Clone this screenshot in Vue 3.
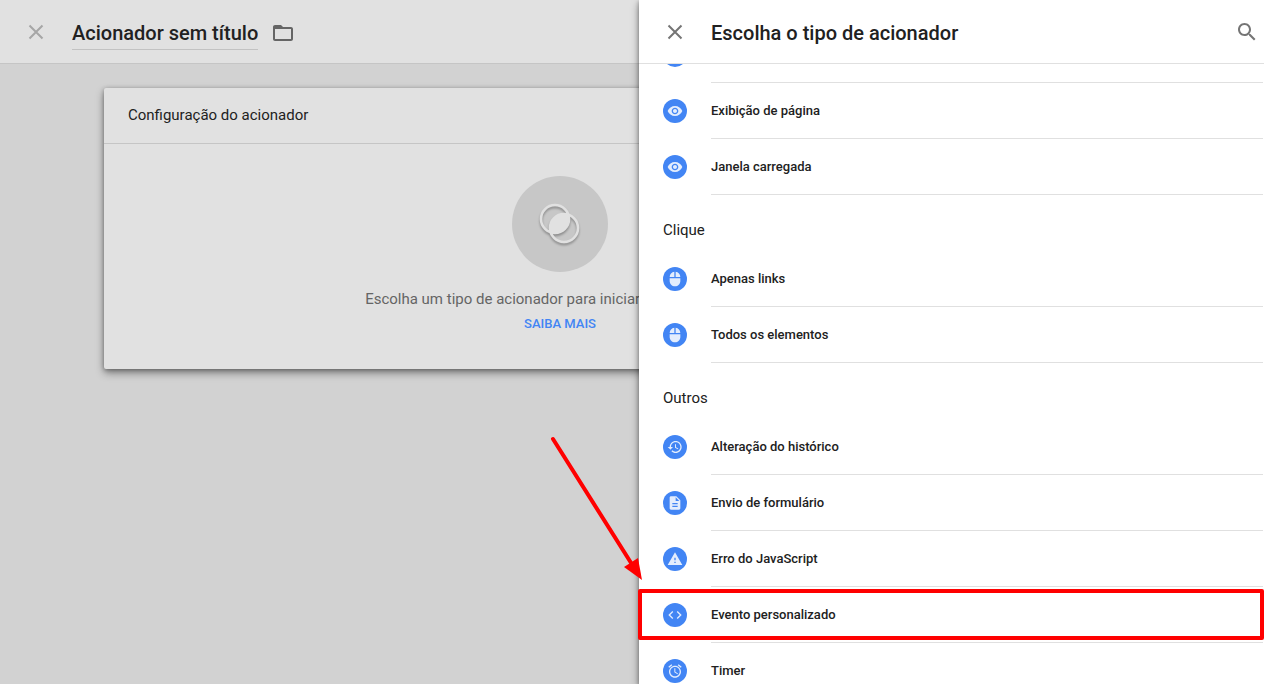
<script setup>
import { ref } from 'vue'

const title = ref('Acionador sem título')

const paths = {
  eye: 'M12 4.5C7 4.5 2.73 7.61 1 12c1.73 4.39 6 7.5 11 7.5s9.27-3.11 11-7.5c-1.73-4.39-6-7.5-11-7.5zM12 17c-2.76 0-5-2.24-5-5s2.24-5 5-5 5 2.24 5 5-2.24 5-5 5zm0-8c-1.66 0-3 1.34-3 3s1.34 3 3 3 3-1.34 3-3-1.34-3-3-3z',
  mouse: 'M13 1.07V9h7c0-4.08-3.05-7.44-7-7.93zM4 15c0 4.42 3.58 8 8 8s8-3.58 8-8v-4H4v4zm7-13.93C7.05 1.56 4 4.92 4 9h7V1.07z',
  history: 'M13 3c-4.97 0-9 4.03-9 9H1l3.89 3.89.07.14L9 12H6c0-3.87 3.13-7 7-7s7 3.13 7 7-3.13 7-7 7c-1.93 0-3.68-.79-4.94-2.06l-1.42 1.42C8.27 19.99 10.51 21 13 21c4.97 0 9-4.03 9-9s-4.03-9-9-9zm-1 5v5l4.28 2.54.72-1.21-3.5-2.08V8H12z',
  file: 'M14 2H6c-1.1 0-1.99.9-1.99 2L4 20c0 1.1.89 2 1.99 2H18c1.1 0 2-.9 2-2V8l-6-6zm2 16H8v-2h8v2zm0-4H8v-2h8v2zm-3-5V3.5L18.5 9H13z',
  warning: 'M1 21h22L12 2 1 21zm12-3h-2v-2h2v2zm0-4h-2v-4h2v4z',
  code: 'M9.4 16.6L4.8 12l4.6-4.6L8 6l-6 6 6 6 1.4-1.4zm5.2 0l4.6-4.6-4.6-4.6L16 6l6 6-6 6-1.4-1.4z',
  alarm: 'M22 5.72l-4.6-3.86-1.29 1.53 4.6 3.86L22 5.72zM7.88 3.39L6.6 1.86 2 5.71l1.29 1.53 4.59-3.85zM12.5 8H11v6l4.75 2.85.75-1.23-4-2.37V8zM12 4c-4.97 0-9 4.03-9 9s4.02 9 9 9c4.97 0 9-4.03 9-9s-4.03-9-9-9zm0 16c-3.87 0-7-3.13-7-7s3.13-7 7-7 7 3.13 7 7-3.13 7-7 7z'
}

const groups = [
  {
    items: [
      { icon: 'eye', label: '' },
      { icon: 'eye', label: 'Exibição de página' },
      { icon: 'eye', label: 'Janela carregada' }
    ]
  },
  {
    heading: 'Clique',
    items: [
      { icon: 'mouse', label: 'Apenas links' },
      { icon: 'mouse', label: 'Todos os elementos' }
    ]
  },
  {
    heading: 'Outros',
    items: [
      { icon: 'history', label: 'Alteração do histórico' },
      { icon: 'file', label: 'Envio de formulário' },
      { icon: 'warning', label: 'Erro do JavaScript' },
      { icon: 'code', label: 'Evento personalizado' },
      { icon: 'alarm', label: 'Timer' }
    ]
  }
]
</script>

<template>
  <div class="screen">
    <main class="editor">
      <header class="bar editor-bar">
        <button class="icon-button" aria-label="Fechar">
          <svg width="16" height="16" viewBox="0 0 16 16"><path d="M1.5 1.5l13 13M14.5 1.5l-13 13" fill="none" stroke="#a6a6a6" stroke-width="2" /></svg>
        </button>
        <input v-model="title" class="title title-input" aria-label="Nome" />
        <button class="icon-button folder" aria-label="Pasta">
          <svg width="24" height="24" viewBox="0 0 24 24"><path fill="#656565" d="M20 6h-8l-2-2H4c-1.1 0-2 .9-2 2v12c0 1.1.9 2 2 2h16c1.1 0 2-.9 2-2V8c0-1.1-.9-2-2-2zm0 12H4V8h16v10z" /></svg>
        </button>
      </header>
      <section class="card">
        <h2 class="card-title">Configuração do acionador</h2>
        <div class="card-body">
          <div class="emblem">
            <svg width="48" height="48" viewBox="0 0 48 48">
              <g class="rings">
                <circle cx="19" cy="19" r="14" fill="none" stroke="#e1e1e1" stroke-width="2.6" />
                <circle cx="28" cy="28" r="14" fill="none" stroke="#e1e1e1" stroke-width="2.6" />
                <path d="M32.800 14.200A15 15 0 0 1 14.200 32.800A15 15 0 0 1 32.800 14.200z" fill="#e1e1e1" />
              </g>
            </svg>
          </div>
          <p class="hint">Escolha um tipo de acionador para iniciar a configuração...</p>
          <a class="more" href="#">SAIBA MAIS</a>
        </div>
      </section>
    </main>

    <aside class="drawer">
      <header class="bar drawer-bar">
        <button class="icon-button" aria-label="Fechar">
          <svg width="16" height="16" viewBox="0 0 16 16"><path d="M1.5 1.5l13 13M14.5 1.5l-13 13" fill="none" stroke="#757575" stroke-width="2" /></svg>
        </button>
        <h1 class="title">Escolha o tipo de acionador</h1>
        <button class="icon-button search" aria-label="Pesquisar">
          <svg width="24" height="24" viewBox="0 0 24 24"><path fill="#757575" d="M15.5 14h-.79l-.28-.27C15.41 12.59 16 11.11 16 9.5 16 5.91 13.09 3 9.5 3S3 5.91 3 9.5 5.91 16 9.5 16c1.61 0 3.09-.59 4.23-1.57l.27.28v.79l5 4.99L20.49 19l-4.99-5zm-6 0C7.01 14 5 11.99 5 9.5S7.01 5 9.5 5 14 7.01 14 9.5 11.99 14 9.5 14z" /></svg>
        </button>
      </header>
      <div class="viewport">
        <div class="list">
          <section v-for="(group, g) in groups" :key="g">
            <h3 v-if="group.heading" class="heading">{{ group.heading }}</h3>
            <button v-for="(item, i) in group.items" :key="i" class="row">
              <span class="badge">
                <svg width="16" height="16" viewBox="0 0 24 24"><path fill="#e3edfd" :d="paths[item.icon]" /></svg>
              </span>
              <span class="label">{{ item.label }}</span>
            </button>
          </section>
        </div>
      </div>
    </aside>

    <div class="highlight"></div>
    <svg class="arrow" width="100" height="150" viewBox="0 0 100 150">
      <path d="M8 9L88 136" fill="none" stroke="#f00" stroke-width="4" stroke-linecap="round" />
      <path d="M97 150L79 137L93 128z" fill="#f00" />
    </svg>
  </div>
</template>

<style>
body {
  margin: 0;
  overflow: hidden;
}
</style>

<style scoped>
.screen {
  position: relative;
  height: 100vh;
  overflow: hidden;
  background: #d2d2d2;
  color: #212121;
  font-family: Roboto, "Liberation Sans", sans-serif;
}
button {
  padding: 0;
  border: 0;
  background: none;
  font: inherit;
  color: inherit;
  text-align: left;
  cursor: pointer;
}
h1, h2, h3, p {
  margin: 0;
}
svg {
  display: block;
}
.bar {
  display: flex;
  align-items: center;
  box-sizing: border-box;
  height: 64px;
  padding: 1px 5px 0 24px;
}
.editor-bar {
  background: #e1e1e1;
  border-bottom: 1px solid #c5c5c5;
}
.drawer-bar {
  flex: none;
  border-bottom: 1px solid #e0e0e0;
}
.icon-button {
  display: flex;
  flex: none;
  align-items: center;
  justify-content: center;
  width: 24px;
  height: 24px;
}
.title {
  margin-left: 24px;
  padding: 2px 0 0;
  font-size: 20px;
  line-height: 32px;
  font-weight: 500;
}
.title-input {
  box-sizing: border-box;
  field-sizing: content;
  height: 36px;
  padding: 3px 0 0;
  border: 0;
  border-bottom: 1px solid #c2c2c2;
  background: none;
  color: inherit;
  font-family: inherit;
  outline: none;
}
.folder {
  margin: 2px 0 0 13px;
}
.search {
  margin-left: auto;
}
.card {
  margin: 24px 248px 0 104px;
  border-radius: 2px;
  background: #e1e1e1;
  box-shadow: 0 4px 8px rgba(0, 0, 0, 0.4), 0 1px 4px rgba(0, 0, 0, 0.3);
}
.card-title {
  padding: 0 24px;
  border-bottom: 1px solid #c5c5c5;
  font-size: 15px;
  line-height: 55px;
  font-weight: 400;
}
.card-body {
  display: flex;
  flex-direction: column;
  align-items: center;
  padding: 32px 24px 33px;
}
.emblem {
  display: flex;
  align-items: center;
  justify-content: center;
  width: 96px;
  height: 96px;
  border-radius: 50%;
  background: #c7c7c7;
}
.rings {
  filter: drop-shadow(0 2px 1px rgba(0, 0, 0, 0.3));
}
.hint {
  margin-top: 15px;
  color: #656565;
  font-size: 15px;
  line-height: 24px;
  white-space: nowrap;
}
.more {
  color: #4285f4;
  font-size: 13px;
  line-height: 25px;
  font-weight: 500;
  text-decoration: none;
}
.drawer {
  position: absolute;
  top: 0;
  right: 0;
  bottom: 0;
  display: flex;
  flex-direction: column;
  width: calc(50% - 7px);
  background: #fff;
  box-shadow: 0 4px 8px rgba(0, 0, 0, 0.4), 0 1px 4px rgba(0, 0, 0, 0.3);
}
.viewport {
  flex: 1;
  min-height: 0;
  overflow: hidden;
}
.list {
  margin: -37px 1px 0 24px;
}
.heading {
  box-sizing: border-box;
  height: 56px;
  padding-top: 23px;
  font-size: 15px;
  line-height: 24px;
  font-weight: 400;
}
.row {
  display: flex;
  align-items: center;
  gap: 24px;
  width: 100%;
  height: 56px;
}
.badge {
  display: flex;
  flex: none;
  align-items: center;
  justify-content: center;
  width: 24px;
  height: 24px;
  border-radius: 50%;
  background: #4285f4;
}
.label {
  flex: 1;
  height: 55px;
  border-bottom: 1px solid #e0e0e0;
  font-size: 13px;
  line-height: 55px;
  font-weight: 500;
}
.highlight {
  position: absolute;
  top: 589px;
  right: 0;
  box-sizing: border-box;
  width: calc(50% - 6px);
  height: 51px;
  border: 4px solid #f00;
  border-radius: 2px;
  pointer-events: none;
}
.arrow {
  position: absolute;
  top: 430px;
  left: calc(50% - 87px);
  pointer-events: none;
}
</style>
